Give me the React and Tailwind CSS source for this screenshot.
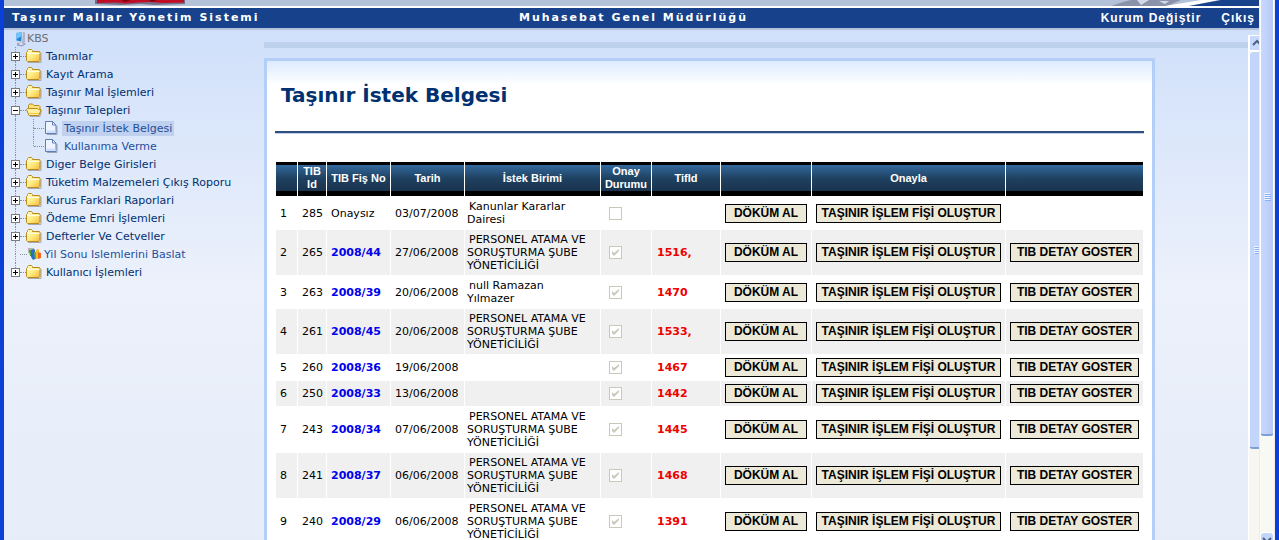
import clsx from "clsx";

const menu = [
  { label: "Tanımlar" },
  { label: "Kayıt Arama" },
  { label: "Taşınır Mal İşlemleri" },
  {
    label: "Taşınır Talepleri",
    open: true,
    children: [{ label: "Taşınır İstek Belgesi", active: true }, { label: "Kullanıma Verme" }],
  },
  { label: "Diger Belge Girisleri" },
  { label: "Tüketim Malzemeleri Çıkış Roporu" },
  { label: "Kurus Farklari Raporlari" },
  { label: "Ödeme Emri İşlemleri" },
  { label: "Defterler Ve Cetveller" },
  { label: "Yil Sonu Islemlerini Baslat", leaf: true },
  { label: "Kullanıcı İşlemleri" },
];

const sube = "PERSONEL ATAMA VE SORUŞTURMA ŞUBE YÖNETİCİLİĞİ";

const rows = [
  { id: 285, fis: null, tarih: "03/07/2008", birim: "Kanunlar Kararlar Dairesi", onay: false, tif: "" },
  { id: 265, fis: "2008/44", tarih: "27/06/2008", birim: sube, onay: true, tif: "1516," },
  { id: 263, fis: "2008/39", tarih: "20/06/2008", birim: "null Ramazan Yılmazer", onay: true, tif: "1470" },
  { id: 261, fis: "2008/45", tarih: "20/06/2008", birim: sube, onay: true, tif: "1533," },
  { id: 260, fis: "2008/36", tarih: "19/06/2008", birim: "", onay: true, tif: "1467" },
  { id: 250, fis: "2008/33", tarih: "13/06/2008", birim: "", onay: true, tif: "1442" },
  { id: 243, fis: "2008/34", tarih: "07/06/2008", birim: sube, onay: true, tif: "1445" },
  { id: 241, fis: "2008/37", tarih: "06/06/2008", birim: sube, onay: true, tif: "1468" },
  { id: 240, fis: "2008/29", tarih: "06/06/2008", birim: sube, onay: true, tif: "1391" },
];

const headers = ["", "TIB Id", "TIB Fiş No", "Tarih", "İstek Birimi", "Onay Durumu", "TifId", "", "Onayla", ""];

const ComputerIcon = () => (
  <svg width="16" height="16" viewBox="0 0 16 16" aria-hidden="true">
    <path d="M6 12l6-1 3 2-4 2.500-5-1z" fill="#9a9dbb" />
    <path d="M7 12.500l4-.5 2 1-3 1.200z" fill="#e4e6f2" />
    <path d="M11.500.5L14 1.500v9.500l-3 2z" fill="#aeb4cc" />
    <path d="M4.500 1L12 0l-1 12-6.500-1.500z" fill="#d5dbe9" />
    <path d="M5.500 2l5.500-.8-.8 9.300-4.700-1z" fill="#1f86e0" />
    <path d="M5.500 2l5.500-.8-.3 4L5.500 8z" fill="#6fc6ff" />
  </svg>
);

const FolderIcon = () => (
  <svg width="16" height="16" viewBox="0 0 16 16" aria-hidden="true">
    <defs>
      <linearGradient id="folder" x1="0" y1="0" x2="1" y2="1">
        <stop offset="0" stopColor="#fffbc8" />
        <stop offset="0.500" stopColor="#ffec82" />
        <stop offset="1" stopColor="#f5b83a" />
      </linearGradient>
    </defs>
    <path d="M2 14.500h13V5" fill="none" stroke="#a8a8b4" />
    <path
      d="M.5 12.500v-8l1-1v-1l1-1h3l1 1v1h7l.5.5v8.500l-1 1h-11.500z"
      fill="url(#folder)"
      stroke="#b98a1c"
    />
    <path d="M1.500 5.500h12" stroke="#fffbe0" />
  </svg>
);

const OpenFolderIcon = () => (
  <svg width="16" height="16" viewBox="0 0 16 16" aria-hidden="true">
    <path d="M4 14.500h10l1.500-6" fill="none" stroke="#a8a8b4" />
    <path d="M2.500 12.500v-9l1-1.500h3l1.500 1.500h5l1 1v7z" fill="#ffe27a" stroke="#b98a1c" />
    <path d="M.5 7.500l1-1h10l1 1h2.500l-2 6H3z" fill="#fff0a0" stroke="#b98a1c" />
    <path d="M3.500 11.500h9.500" stroke="#f6c64a" />
  </svg>
);

const PageIcon = () => (
  <svg width="16" height="16" viewBox="0 0 16 16" aria-hidden="true">
    <path d="M3 14.500h10V6" fill="none" stroke="#9aa3bb" />
    <path d="M1.500 1.500h7l3.500 3.500v8.500H1.500z" fill="#edf3ff" stroke="#5f7fb4" />
    <path d="M8.500 1.500V5H12z" fill="#fff" stroke="#5f7fb4" />
    <path d="M2.500 10.500h9v2.500h-9z" fill="#cfdffb" />
  </svg>
);

const ChartIcon = () => (
  <svg width="16" height="16" viewBox="0 0 16 16" aria-hidden="true">
    <path d="M1 2h6v2H3v3H1z" fill="#b9b3b0" />
    <path d="M2 4h3v6H3z" fill="#4a9a38" />
    <path d="M4 4l3-1 1 1v9l-2 1-2-3z" fill="#2372c8" />
    <path d="M7 6h3v7H8z" fill="#69b53c" />
    <path d="M9 4l3-1v9l-3 1z" fill="#f6b930" />
    <path d="M11 6l3 1v5l-3 1z" fill="#ee6a18" />
  </svg>
);

const Toggle = ({ open }) => (
  <button aria-label={open ? "Kapat" : "Aç"} className="block h-[9px] w-[9px]">
    <svg width="9" height="9" viewBox="0 0 9 9" shapeRendering="crispEdges">
      <rect x="0.500" y="0.500" width="8" height="8" fill="#fff" stroke="#7b7b7b" />
      <path d={open ? "M2 4.500h5" : "M2 4.500h5M4.500 2v5"} stroke="#000" />
    </svg>
  </button>
);

const Dots = ({ className }) => <span className={clsx("border-dotted border-[#8a8f9c]", className)} />;

const MenuItem = ({ item, last }) => (
  <li>
    <div className="flex h-[18px] items-center">
      <span className="flex w-[9px] flex-col items-center self-stretch">
        <Dots className="flex-1 border-l" />
        {!item.leaf && <Toggle open={item.open} />}
        <Dots className={clsx("flex-1", !last && "border-l")} />
      </span>
      <Dots className={clsx("border-t", item.leaf ? "w-[7px]" : "w-1.5")} />
      {item.leaf ? <ChartIcon /> : item.open ? <OpenFolderIcon /> : <FolderIcon />}
      <a href="#" className={clsx("whitespace-nowrap", item.leaf ? "ml-px text-[#1f4f9b]" : "ml-1 text-[#003070]")}>
        {item.label}
      </a>
    </div>
    {item.children && (
      <ul className="ml-1 border-l border-dotted border-[#8a8f9c] pl-[17px]">
        {item.children.map((child, i) => (
          <li key={child.label} className="flex h-[18px] items-center">
            <span className="flex flex-col self-stretch">
              <Dots className="flex-1 border-l" />
              <Dots className={clsx("flex-1", i === 0 && "border-l")} />
            </span>
            <Dots className="w-2.5 border-t" />
            <PageIcon />
            <a
              href="#"
              className={clsx("ml-0.5 px-0.5 whitespace-nowrap text-[#1f4f9b]", child.active && "bg-[#bfd1ee]")}
            >
              {child.label}
            </a>
          </li>
        ))}
      </ul>
    )}
  </li>
);

const Sidebar = () => (
  <nav className="w-[260px] shrink-0 pl-[7px] text-[11px] leading-[15px]">
    <div className="flex h-[17px] items-center text-[#6d6d6d]">
      <ComputerIcon />
      <span>KBS</span>
    </div>
    <ul>
      {menu.map((item, i) => (
        <MenuItem key={item.label} item={item} last={i === menu.length - 1} />
      ))}
    </ul>
  </nav>
);

const Banner = () => (
  <header className="shrink-0">
    <div className="flex h-1.5 justify-between bg-[#b3c1d9] pl-[89px]">
      <svg width="94" height="6" viewBox="0 0 94 6" aria-hidden="true">
        <path d="M2 0h90v4l-30 1-14-1-20 1-26-1z" fill="#5b4a63" opacity="0.700" />
        <path d="M4 0h87v2.500l-22 .5-12-1-12 .5-12 1-10-1-19 .5z" fill="#c00d24" />
        <path d="M28 0h10l-6 2zM56 0h8l-5 2z" fill="#7a0014" />
      </svg>
      <svg width="150" height="6" viewBox="0 0 150 6" aria-hidden="true">
        <path d="M2 6L14 2 22 0h50l-14 6z" fill="#8b93ab" />
        <path d="M28 0h12l-8 5zM50 1h10l-4 3z" fill="#d3d9e8" />
        <path d="M56 6L92 0h18L80 6z" fill="#fff" />
        <path d="M80 6L112 0h38v6z" fill="#17418a" />
      </svg>
    </div>
    <div className="flex h-[22px] items-center justify-between border-t-2 border-white bg-[#17418a] pr-1 pl-2 text-[11px] font-bold text-white">
      <span className="flex-1 tracking-[2px]">Taşınır Mallar Yönetim Sistemi</span>
      <span className="tracking-[2px]">Muhasebat Genel Müdürlüğü</span>
      <span className="flex flex-1 justify-end gap-5 font-['Liberation_Sans',Arial,sans-serif] text-[12px] tracking-[1px]">
        <a href="#">Kurum Değiştir</a>
        <a href="#">Çıkış</a>
      </span>
    </div>
    <div className="h-0.5 bg-[#b3c1d9]" />
  </header>
);

const ActionButton = ({ children }) => (
  <button className="block h-[19px] w-full border border-black bg-[#ece9d8] font-['Liberation_Sans',Arial,sans-serif] text-[12px] leading-[17px] font-bold whitespace-nowrap">
    {children}
  </button>
);

const RequestTable = () => (
  <table className="w-full table-fixed border-separate border-spacing-px text-[11px] leading-[13px] text-black">
    <colgroup>
      <col className="w-[21px]" />
      <col className="w-7" />
      <col className="w-[63px]" />
      <col className="w-[73px]" />
      <col />
      <col className="w-[50px]" />
      <col className="w-[68px]" />
      <col className="w-[90px]" />
      <col className="w-[193px]" />
      <col className="w-[137px]" />
    </colgroup>
    <thead>
      <tr className="font-['Liberation_Sans',Arial,sans-serif] text-white">
        {headers.map((h, i) => (
          <th
            key={i}
            className="border-t-[3px] border-b-[5px] border-black bg-linear-to-b from-[#336a9f] via-[#1f4262] via-50% to-[#19334d] p-0 font-bold"
          >
            {h}
          </th>
        ))}
      </tr>
    </thead>
    <tbody>
      {rows.map((row, i) => (
        <tr key={row.id} className="*:py-[3px] even:*:bg-[#f0f0f0]">
          <td className="px-1">{i + 1}</td>
          <td className="px-1">{row.id}</td>
          <td className="px-1">
            {row.fis ? (
              <a href="#" className="font-bold text-[#0000ee]">
                {row.fis}
              </a>
            ) : (
              "Onaysız"
            )}
          </td>
          <td className="px-1">{row.tarih}</td>
          <td className="pr-3 pl-0.5 indent-0.5">{row.birim}</td>
          <td className="px-2">
            <label className="relative block h-[13px] w-[13px]">
              <input
                type="checkbox"
                aria-label="Onay Durumu"
                disabled
                defaultChecked={row.onay}
                className="block h-[13px] w-[13px] appearance-none border border-[#cac8bb] bg-white"
              />
              {row.onay && (
                <svg className="absolute inset-0" width="13" height="13" viewBox="0 0 13 13">
                  <path d="M3 5v3l2 2 5-5V3L5 7z" fill="#cac8bb" />
                </svg>
              )}
            </label>
          </td>
          <td className="px-[5px] font-bold text-[#ee0000]">{row.tif}</td>
          <td className="px-1">
            <ActionButton>DÖKÜM AL</ActionButton>
          </td>
          <td className="px-1">
            <ActionButton>TAŞINIR İŞLEM FİŞİ OLUŞTUR</ActionButton>
          </td>
          {row.fis ? (
            <td className="px-1">
              <ActionButton>TIB DETAY GOSTER</ActionButton>
            </td>
          ) : (
            <td />
          )}
        </tr>
      ))}
    </tbody>
  </table>
);

const Grip = () => (
  <svg width="7" height="8" viewBox="0 0 7 8" shapeRendering="crispEdges" aria-hidden="true">
    <path d="M0 .5h6M0 2.500h6M0 4.500h6M0 6.500h6" stroke="#eef4fe" />
    <path d="M1 1.500h6M1 3.500h6M1 5.500h6M1 7.500h6" stroke="#8cb0f8" />
  </svg>
);

const App = () => {
  return (
    <div className="flex h-screen overflow-hidden border-r-4 border-l-4 border-[#0a3fd8] bg-white font-[Verdana,'DejaVu_Sans',sans-serif]">
      <div className="flex min-w-0 flex-1 flex-col">
        <Banner />
        <div className="flex min-h-0 flex-1 bg-linear-to-b from-[#d0e0fa] via-[#ecf1fb] via-50% to-[#e6edf9]">
          <Sidebar />
          <main className="min-w-0 flex-1 overflow-hidden pt-3">
            <div className="h-1.5 bg-[#bdd1ed]" />
            <section className="mt-2.5 mr-[93px] border-[3px] border-[#b3cff8] bg-white bg-linear-to-b from-[#dcebfd] to-white to-[24px] px-2 pb-4">
              <h1 className="px-1.5 pt-5 text-[20px] leading-7 font-bold text-[#003070]">Taşınır İstek Belgesi</h1>
              <hr className="mt-[22px] mb-[27px] border-t-2 border-b border-t-[#2f4f80] border-b-[#c5d3ea]" />
              <RequestTable />
            </section>
          </main>
          <div className="mt-[5px] flex w-[11px] shrink-0 flex-col overflow-hidden border-l border-white bg-[#f7f6f0]">
            <button aria-label="Yukarı" className="h-4 w-4 shrink-0 border border-white bg-[#c8d8fc]">
              <svg width="14" height="14" viewBox="0 0 14 14">
                <path d="M3 9l4-4 4 4" fill="none" stroke="#4d6185" strokeWidth="2" />
              </svg>
            </button>
            <div className="flex h-[398px] w-4 shrink-0 items-center justify-center rounded-sm border border-b-2 border-white border-b-[#7c9fd8] bg-[#c4d5fc]">
              <Grip />
            </div>
          </div>
        </div>
      </div>
      <div className="flex w-4 shrink-0 flex-col justify-between border-r border-l border-[#eeede5] bg-[#f9f9f4]">
        <div className="flex h-[436px] items-center justify-center rounded-b-sm border-x border-b-2 border-x-white border-b-[#7c9fd8] bg-linear-to-r from-[#c9d8fd] to-[#b7c9f8] pb-10">
          <Grip />
        </div>
        <div className="h-2 overflow-hidden rounded-t-sm border border-b-0 border-white bg-[#c4d5fc]">
          <svg width="12" height="8" viewBox="0 0 12 8" aria-hidden="true">
            <path d="M2 5l4 4 4-4" fill="none" stroke="#4d6185" strokeWidth="2" />
          </svg>
        </div>
      </div>
    </div>
  );
};

export default App;
